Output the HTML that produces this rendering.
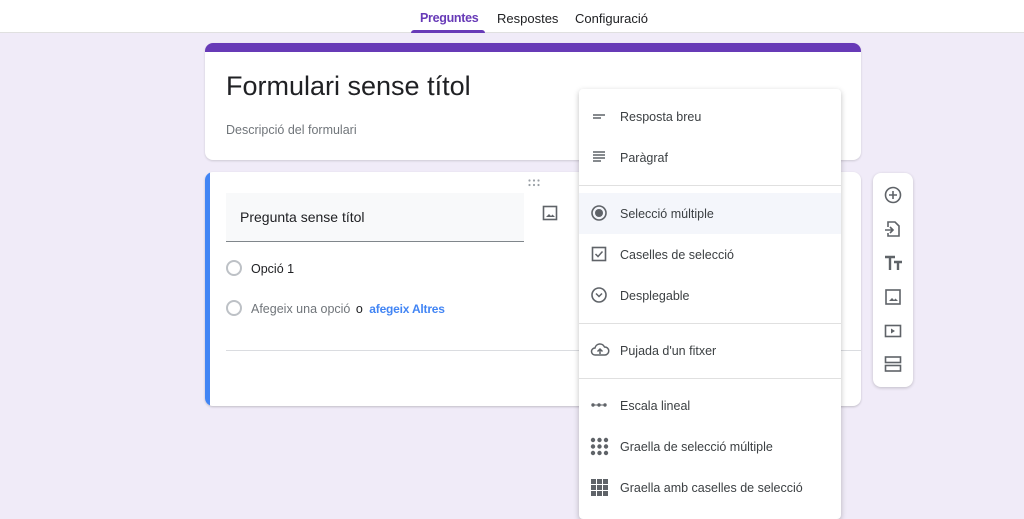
<!DOCTYPE html>
<html><head><style>
*{box-sizing:border-box;margin:0;padding:0}
body{width:1024px;height:512px;overflow:hidden;background:#f0ebf8;font-family:"Liberation Sans",sans-serif;position:relative;color:#202124}
.hdr{position:absolute;left:0;top:0;width:1024px;height:33px;background:#fff;border-bottom:1px solid #e0e0e0}
.tab{position:absolute;top:11px;font-size:13px;color:#202124}
.ab{position:absolute;background:#fff;border-radius:8px}
.mi{position:absolute;left:0;width:262px;height:41px;font-size:12.5px;color:#3c4043}
.mi span{position:absolute;left:41px;top:14px}
.mi svg{position:absolute;left:11px;top:11px}
.div{position:absolute;left:0;width:262px;height:1px;background:#e0e0e0}
.tb svg{position:absolute;left:10px}
</style></head><body>
<div class="hdr">
<div class="tab" style="left:420px;color:#673ab7;font-weight:bold;font-size:12.5px;letter-spacing:-0.3px">Preguntes</div>
<div style="position:absolute;left:411px;top:30px;width:74px;height:3px;background:#673ab7;border-radius:3px 3px 0 0"></div>
<div class="tab" style="left:497px">Respostes</div>
<div class="tab" style="left:575px">Configuració</div>
</div>
<div class="ab" style="left:205px;top:43px;width:656px;height:117px;overflow:hidden;box-shadow:0 1px 2px rgba(0,0,0,.15)">
<div style="height:9px;background:#673ab7"></div>
<div style="position:absolute;left:21px;top:28px;font-size:27px">Formulari sense títol</div>
<div style="position:absolute;left:21px;top:80px;font-size:12.5px;color:#70757a">Descripció del formulari</div>
</div>
<div class="ab" style="left:205px;top:172px;width:656px;height:234px;overflow:hidden;box-shadow:0 1px 2px rgba(0,0,0,.2)">
<div style="position:absolute;left:0;top:0;width:5px;height:234px;background:#4285f4"></div>
<svg style="position:absolute;left:323px;top:7px" width="12" height="8"><g fill="#9aa0a6"><circle cx="1.5" cy="1.5" r="1.1"/><circle cx="6" cy="1.5" r="1.1"/><circle cx="10.5" cy="1.5" r="1.1"/><circle cx="1.5" cy="6" r="1.1"/><circle cx="6" cy="6" r="1.1"/><circle cx="10.5" cy="6" r="1.1"/></g></svg>
<div style="position:absolute;left:21px;top:21px;width:298px;height:49px;background:#f8f9fa;border-bottom:1px solid #80868b"></div>
<div style="position:absolute;left:35px;top:37px;font-size:14px">Pregunta sense títol</div>
<svg style="position:absolute;left:337px;top:33px" width="16" height="16"><rect x="1.5" y="1.5" width="13" height="13" fill="none" stroke="#5f6368" stroke-width="1.6"/><path d="M4 12l3-3 2 2 1.5-1.5L13 12z" fill="#5f6368"/></svg>
<div style="position:absolute;left:21px;top:88px;width:16px;height:16px;border:2px solid #bdc1c6;border-radius:50%"></div>
<div style="position:absolute;left:46px;top:90px;font-size:12.5px">Opció 1</div>
<div style="position:absolute;left:21px;top:128px;width:16px;height:16px;border:2px solid #bdc1c6;border-radius:50%"></div>
<div style="position:absolute;left:46px;top:130px;font-size:12.5px;color:#70757a">Afegeix una opció <span style="color:#202124;margin-left:2px">o</span> <span style="color:#4285f4;margin-left:3px;font-weight:bold;font-size:12px;letter-spacing:-0.2px">afegeix Altres</span></div>
<div style="position:absolute;left:21px;top:178px;width:640px;height:1px;background:#dadce0"></div>
</div>
<div class="ab tb" style="left:873px;top:173px;width:40px;height:214px;box-shadow:0 1px 3px rgba(0,0,0,.2)">
<svg style="top:12px" width="20" height="20"><circle cx="10" cy="10" r="7.5" fill="none" stroke="#5f6368" stroke-width="1.6"/><path d="M10 6v8M6 10h8" stroke="#5f6368" stroke-width="1.6"/></svg>
<svg style="top:46px" width="20" height="20"><path d="M5 8V3h7l4 4v10H5v-3M2 11h8M7 8l3 3-3 3" fill="none" stroke="#5f6368" stroke-width="1.6"/></svg>
<svg style="top:80px" width="20" height="20"><path d="M2 4h10M7 4v13M11 9h8M15 9v8" stroke="#5f6368" stroke-width="2.4"/></svg>
<svg style="top:114px" width="20" height="20"><rect x="3" y="3" width="14" height="14" fill="none" stroke="#5f6368" stroke-width="1.6"/><path d="M6 14l3-3 2 2 1.5-1.5L15 14z" fill="#5f6368"/></svg>
<svg style="top:148px" width="20" height="20"><rect x="2.5" y="4.5" width="15" height="11" fill="none" stroke="#5f6368" stroke-width="1.6"/><path d="M8 7.5v5l4-2.5z" fill="#5f6368"/></svg>
<svg style="top:181px" width="20" height="20"><rect x="2.5" y="3" width="15" height="5.5" fill="none" stroke="#5f6368" stroke-width="1.6"/><rect x="2.5" y="11.5" width="15" height="5.5" fill="none" stroke="#5f6368" stroke-width="1.6"/></svg>
</div>
<div style="position:absolute;left:579px;top:89px;width:262px;height:430px;background:#fff;border-radius:4px;box-shadow:0 2px 6px rgba(0,0,0,.25)">
<div class="mi" style="top:7px"><svg width="18" height="18"><path d="M3 8h12M3 11h8" stroke="#5f6368" stroke-width="1.5"/></svg><span>Resposta breu</span></div>
<div class="mi" style="top:48px"><svg width="18" height="18"><path d="M3 4h12M3 7h12M3 10h12M3 13h8" stroke="#5f6368" stroke-width="1.4"/></svg><span>Paràgraf</span></div>
<div class="div" style="top:96px"></div>
<div class="mi" style="top:104px;background:#f4f6fb"><svg width="18" height="18"><circle cx="9" cy="9" r="7" fill="none" stroke="#5f6368" stroke-width="1.6"/><circle cx="9" cy="9" r="4" fill="#5f6368"/></svg><span>Selecció múltiple</span></div>
<div class="mi" style="top:145px"><svg width="18" height="18"><rect x="2.5" y="2.5" width="13" height="13" fill="none" stroke="#5f6368" stroke-width="1.6"/><path d="M5.5 9l2.5 2.5 4.5-5" fill="none" stroke="#5f6368" stroke-width="1.5"/></svg><span>Caselles de selecció</span></div>
<div class="mi" style="top:186px"><svg width="18" height="18"><circle cx="9" cy="9" r="7" fill="none" stroke="#5f6368" stroke-width="1.6"/><path d="M6 7.5l3 3 3-3" fill="none" stroke="#5f6368" stroke-width="1.5"/></svg><span>Desplegable</span></div>
<div class="div" style="top:234px"></div>
<div class="mi" style="top:241px"><svg width="20" height="18"><path d="M5 14a3.5 3.5 0 0 1 0-7 5 5 0 0 1 9.5-1A4 4 0 0 1 15 14z" fill="none" stroke="#5f6368" stroke-width="1.5"/><path d="M10 13V8M7.5 10.5L10 8l2.5 2.5" fill="none" stroke="#5f6368" stroke-width="1.5"/></svg><span>Pujada d'un fitxer</span></div>
<div class="div" style="top:289px"></div>
<div class="mi" style="top:296px"><svg width="18" height="18"><path d="M2 9h14" stroke="#5f6368" stroke-width="1"/><circle cx="3" cy="9" r="1.7" fill="#5f6368"/><circle cx="9" cy="9" r="1.7" fill="#5f6368"/><circle cx="15" cy="9" r="1.7" fill="#5f6368"/></svg><span>Escala lineal</span></div>
<div class="mi" style="top:337px"><svg width="20" height="20" style="top:11px;left:11px"><g fill="#5f6368"><circle cx="3" cy="3" r="2.2"/><circle cx="9.5" cy="3" r="2.2"/><circle cx="16" cy="3" r="2.2"/><circle cx="3" cy="9.5" r="2.2"/><circle cx="9.5" cy="9.5" r="2.2"/><circle cx="16" cy="9.5" r="2.2"/><circle cx="3" cy="16" r="2.2"/><circle cx="9.5" cy="16" r="2.2"/><circle cx="16" cy="16" r="2.2"/></g></svg><span>Graella de selecció múltiple</span></div>
<div class="mi" style="top:378px"><svg width="20" height="20" style="top:11px;left:11px"><g fill="#5f6368"><rect x="1" y="1" width="5" height="5"/><rect x="7" y="1" width="5" height="5"/><rect x="13" y="1" width="5" height="5"/><rect x="1" y="7" width="5" height="5"/><rect x="7" y="7" width="5" height="5"/><rect x="13" y="7" width="5" height="5"/><rect x="1" y="13" width="5" height="5"/><rect x="7" y="13" width="5" height="5"/><rect x="13" y="13" width="5" height="5"/></g></svg><span>Graella amb caselles de selecció</span></div>
</div>
</body></html>
